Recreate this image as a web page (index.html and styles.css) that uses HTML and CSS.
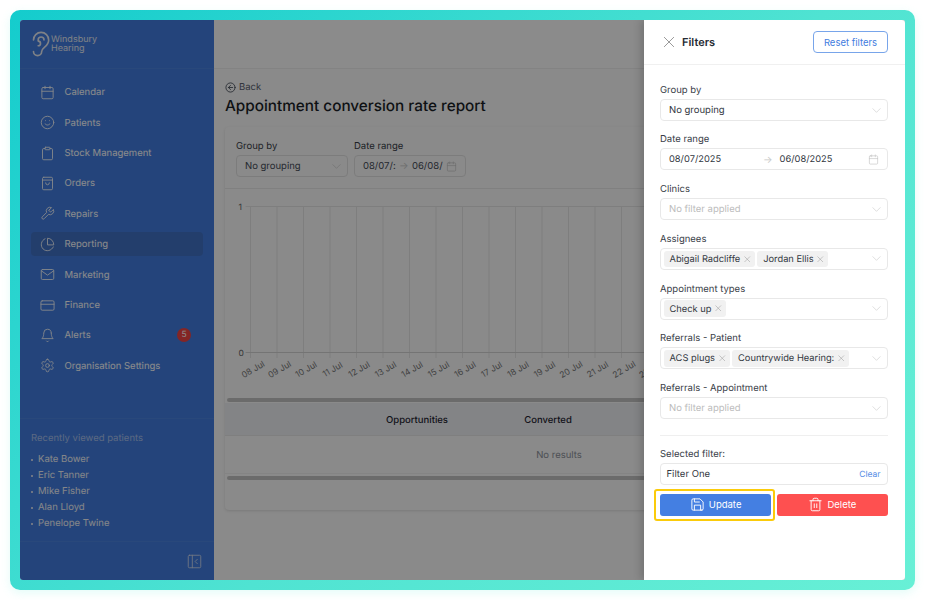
FILE: index.html
```html
<!DOCTYPE html>
<html lang="en">
<head>
<meta charset="utf-8">
<title>Appointment conversion rate report</title>
<link rel="stylesheet" href="styles.css">
</head>
<body>
<svg class="defs" aria-hidden="true"><defs>
<symbol id="chev" viewBox="0 0 24 24"><path d="M4 8l8 8 8-8"/></symbol>
<symbol id="cal" viewBox="0 0 24 24"><rect x="3" y="4" width="18" height="18" rx="2"/><path d="M16 2v4M8 2v4M3 10h18"/></symbol>
<symbol id="x" viewBox="0 0 24 24"><path d="M5 5l14 14M19 5L5 19"/></symbol>
</defs></svg>
<div class="frame">
<div class="shell">
  <aside class="sidebar">
    <div class="logo">
      <svg class="ear" viewBox="3 0 18 24"><path d="M6 8.500a6.500 6.500 0 1 1 13 0c0 6-6 6-6 10a3.500 3.500 0 1 1-7 0"/><path d="M15 8.500a2.500 2.500 0 0 0-5 0v1a2 2 0 1 1 0 4"/></svg>
      <div class="logo-text">Windsbury<br>Hearing</div>
    </div>
    <nav class="nav">
      <a class="nav-item"><svg class="nav-icon" viewBox="0 0 24 24"><rect x="3" y="4" width="18" height="18" rx="2"/><path d="M16 2v4M8 2v4M3 10h18"/></svg>Calendar</a>
      <a class="nav-item"><svg class="nav-icon" viewBox="0 0 24 24"><circle cx="12" cy="12" r="10"/><path d="M8 14s1.500 2 4 2 4-2 4-2M9 9h.01M15 9h.01"/></svg>Patients</a>
      <a class="nav-item"><svg class="nav-icon" viewBox="0 0 24 24"><rect x="8" y="2" width="8" height="4" rx="1"/><path d="M16 4h2a2 2 0 0 1 2 2v14a2 2 0 0 1-2 2H6a2 2 0 0 1-2-2V6a2 2 0 0 1 2-2h2"/></svg>Stock Management</a>
      <a class="nav-item"><svg class="nav-icon" viewBox="0 0 24 24"><rect x="4" y="2" width="16" height="20" rx="2"/><path d="M4 6.500h16M9 11a3 3 0 0 0 6 0"/></svg>Orders</a>
      <a class="nav-item"><svg class="nav-icon" viewBox="0 0 24 24"><path d="M14.700 6.300a1 1 0 0 0 0 1.400l1.600 1.600a1 1 0 0 0 1.400 0l3.770-3.770a6 6 0 0 1-7.940 7.940l-6.910 6.910a2.120 2.120 0 0 1-3-3l6.910-6.910a6 6 0 0 1 7.940-7.940l-3.760 3.760z"/></svg>Repairs</a>
      <a class="nav-item active"><svg class="nav-icon" viewBox="0 0 24 24"><path d="M21.210 15.890A10 10 0 1 1 8 2.830"/><path d="M22 12A10 10 0 0 0 12 2v10z"/></svg>Reporting</a>
      <a class="nav-item"><svg class="nav-icon" viewBox="0 0 24 24"><rect x="2" y="4" width="20" height="16" rx="2"/><path d="M22 6l-10 7L2 6"/></svg>Marketing</a>
      <a class="nav-item"><svg class="nav-icon" viewBox="0 0 24 24"><rect x="1.500" y="4.500" width="21" height="15" rx="2"/><path d="M1.500 10h21"/></svg>Finance</a>
      <a class="nav-item"><svg class="nav-icon" viewBox="0 0 24 24"><path d="M18 8A6 6 0 0 0 6 8c0 7-3 9-3 9h18s-3-2-3-9"/><path d="M13.730 21a2 2 0 0 1-3.460 0"/></svg>Alerts<span class="badge">5</span></a>
      <a class="nav-item"><svg class="nav-icon" viewBox="0 0 24 24"><path d="M12.220 2h-.44a2 2 0 0 0-2 2v.18a2 2 0 0 1-1 1.730l-.43.25a2 2 0 0 1-2 0l-.15-.08a2 2 0 0 0-2.730.73l-.22.38a2 2 0 0 0 .73 2.730l.15.1a2 2 0 0 1 1 1.720v.51a2 2 0 0 1-1 1.740l-.15.09a2 2 0 0 0-.73 2.730l.22.38a2 2 0 0 0 2.730.73l.15-.08a2 2 0 0 1 2 0l.43.25a2 2 0 0 1 1 1.730V20a2 2 0 0 0 2 2h.44a2 2 0 0 0 2-2v-.18a2 2 0 0 1 1-1.730l.43-.25a2 2 0 0 1 2 0l.15.08a2 2 0 0 0 2.730-.73l.22-.39a2 2 0 0 0-.73-2.730l-.15-.08a2 2 0 0 1-1-1.740v-.5a2 2 0 0 1 1-1.740l.15-.09a2 2 0 0 0 .73-2.730l-.22-.38a2 2 0 0 0-2.730-.73l-.15.08a2 2 0 0 1-2 0l-.43-.25a2 2 0 0 1-1-1.730V4a2 2 0 0 0-2-2z"/><circle cx="12" cy="12" r="3"/></svg>Organisation Settings</a>
    </nav>
    <section class="recent">
      <div class="recent-title">Recently viewed patients</div>
      <ul class="recent-list">
        <li>Kate Bower</li>
        <li>Eric Tanner</li>
        <li>Mike Fisher</li>
        <li>Alan Lloyd</li>
        <li>Penelope Twine</li>
      </ul>
    </section>
    <div class="side-foot">
      <svg class="collapse" viewBox="0 0 24 24"><rect x="2" y="2" width="20" height="20" rx="2"/><path d="M8.500 2v20M16.500 8.500l-3.500 3.500 3.500 3.500"/></svg>
    </div>
  </aside>

  <main class="main">
    <div class="topbar"></div>
    <div class="content">
      <a class="back"><svg class="back-icon" viewBox="0 0 24 24"><circle cx="12" cy="12" r="10"/><path d="M12 7.500L7.500 12l4.500 4.500M16.500 12h-9"/></svg>Back</a>
      <h1 class="title">Appointment conversion rate report</h1>
      <div class="card">
        <div class="card-filters">
          <div class="cf-group">
            <div class="cf-label">Group by</div>
            <div class="cf-box cf-select">No grouping<svg class="chev"><use href="#chev"/></svg></div>
          </div>
          <div class="cf-group">
            <div class="cf-label">Date range</div>
            <div class="cf-box cf-date"><span class="cf-d1">08/07/:</span><span class="arrow">→</span><span class="cf-d2">06/08/</span><svg class="calicon"><use href="#cal"/></svg></div>
          </div>
        </div>
        <svg class="chart" width="668" height="209" viewBox="0 0 668 209">
          <defs><pattern id="grid" x="25" y="0" width="26.500" height="209" patternUnits="userSpaceOnUse"><path class="gl" d="M.5 0v209"/></pattern></defs>
          <rect class="gridfill" x="25" y="17" width="643" height="152" fill="url(#grid)"/>
          <path class="gl" d="M21 17.500h647"/>
          <path class="axis" d="M21 163.500h647"/>
          <text class="ytick" x="13.500" y="20.500">1</text>
          <text class="ytick" x="13.500" y="166.500">0</text>
          <g class="xticks">
            <text transform="translate(29.500 183) rotate(-30)">08 Jul</text>
            <text transform="translate(56 183) rotate(-30)">09 Jul</text>
            <text transform="translate(82.500 183) rotate(-30)">10 Jul</text>
            <text transform="translate(109 183) rotate(-30)">11 Jul</text>
            <text transform="translate(135.500 183) rotate(-30)">12 Jul</text>
            <text transform="translate(162 183) rotate(-30)">13 Jul</text>
            <text transform="translate(188.500 183) rotate(-30)">14 Jul</text>
            <text transform="translate(215 183) rotate(-30)">15 Jul</text>
            <text transform="translate(241.500 183) rotate(-30)">16 Jul</text>
            <text transform="translate(268 183) rotate(-30)">17 Jul</text>
            <text transform="translate(294.500 183) rotate(-30)">18 Jul</text>
            <text transform="translate(321 183) rotate(-30)">19 Jul</text>
            <text transform="translate(347.500 183) rotate(-30)">20 Jul</text>
            <text transform="translate(374 183) rotate(-30)">21 Jul</text>
            <text transform="translate(400.500 183) rotate(-30)">22 Jul</text>
            <text transform="translate(427 183) rotate(-30)">23 Jul</text>
          </g>
        </svg>
        <div class="scrollbar"></div>
        <div class="thead"><div></div><div class="th">Opportunities</div><div class="th">Converted</div></div>
        <div class="empty">No results</div>
        <div class="scrollbar scrollbar-low"></div>
      </div>
    </div>
  </main>

  <div class="scrim"></div>

  <aside class="drawer">
    <header class="drawer-head">
      <svg class="close"><use href="#x"/></svg>
      <div class="drawer-title">Filters</div>
      <button class="reset">Reset filters</button>
    </header>
    <div class="drawer-body">
      <div class="field">
        <label class="lbl">Group by</label>
        <div class="box">No grouping<svg class="chev"><use href="#chev"/></svg></div>
      </div>
      <div class="field">
        <label class="lbl">Date range</label>
        <div class="box date"><span class="d1">08/07/2025</span><span class="arrow">→</span><span class="d2">06/08/2025</span><svg class="calicon"><use href="#cal"/></svg></div>
      </div>
      <div class="field">
        <label class="lbl">Clinics</label>
        <div class="box ph">No filter applied<svg class="chev"><use href="#chev"/></svg></div>
      </div>
      <div class="field">
        <label class="lbl">Assignees</label>
        <div class="box tags"><span class="tag">Abigail Radcliffe<svg class="tag-x"><use href="#x"/></svg></span><span class="tag">Jordan Ellis<svg class="tag-x"><use href="#x"/></svg></span><svg class="chev"><use href="#chev"/></svg></div>
      </div>
      <div class="field">
        <label class="lbl">Appointment types</label>
        <div class="box tags"><span class="tag">Check up<svg class="tag-x"><use href="#x"/></svg></span><svg class="chev"><use href="#chev"/></svg></div>
      </div>
      <div class="field">
        <label class="lbl">Referrals - Patient</label>
        <div class="box tags"><span class="tag">ACS plugs<svg class="tag-x"><use href="#x"/></svg></span><span class="tag">Countrywide Hearing:<svg class="tag-x"><use href="#x"/></svg></span><svg class="chev"><use href="#chev"/></svg></div>
      </div>
      <div class="field">
        <label class="lbl">Referrals - Appointment</label>
        <div class="box ph">No filter applied<svg class="chev"><use href="#chev"/></svg></div>
      </div>
      <hr class="divider">
      <label class="lbl sel-lbl">Selected filter:</label>
      <div class="box selected">Filter One<span class="clear">Clear</span></div>
      <div class="actions">
        <button class="btn update"><svg class="btn-icon" viewBox="0 0 24 24"><path d="M19 21H5a2 2 0 0 1-2-2V5a2 2 0 0 1 2-2h11l5 5v11a2 2 0 0 1-2 2z"/><path d="M17 21v-8H7v8M7 3v5h8"/></svg>Update</button>
        <button class="btn delete"><svg class="btn-icon" viewBox="0 0 24 24"><path d="M3 6h18M19 6v14a2 2 0 0 1-2 2H7a2 2 0 0 1-2-2V6m3 0V4a2 2 0 0 1 2-2h4a2 2 0 0 1 2 2v2M10 11v6M14 11v6"/></svg>Delete</button>
      </div>
    </div>
  </aside>
</div>
</div>
</body>
</html>
```
FILE: styles.css
```css
* { box-sizing: border-box; }
html, body { margin: 0; height: 100%; background: #fff; }
body { font-family: Inter, "Liberation Sans", sans-serif; font-size: 9.5px; color: #262b33; overflow: hidden; text-rendering: geometricPrecision; }
.defs { position: absolute; width: 0; height: 0; }
svg { fill: none; stroke: currentColor; stroke-width: 2; stroke-linecap: round; stroke-linejoin: round; flex: none; }

.frame {
  margin: 10px; height: 580px; padding: 10px; border-radius: 10px;
  background: linear-gradient(135deg, #14cccd 0%, #4fe3d2 55%, #68f0d6 100%);
  box-shadow: 0 3px 10px rgba(100, 240, 214, .18);
}
.shell { position: relative; display: flex; height: 560px; background: #fbfbfb; overflow: hidden; border-radius: 3px; }

/* Sidebar */
.sidebar { width: 193.5px; flex: none; display: flex; flex-direction: column; background: #427de0; color: #fff; }
.logo { height: 48.5px; flex: none; display: flex; align-items: center; padding: 0 0 0 9.5px; border-bottom: 1px solid rgba(255,255,255,.05); }
.ear { width: 21px; height: 28px; margin-right: .5px; stroke-width: 1.4; color: #e8ecf5; }
.logo-text { margin-top: 1px; font-size: 9px; line-height: 9px; color: #e8ecf5; }
.nav { display: flex; flex-direction: column; gap: 6.4px; padding: 11.800px 11px 0; }
.nav-item { position: relative; height: 24px; display: flex; align-items: center; gap: 9.5px; padding: 1px 0 0 9px; border-radius: 4px; color: #fff; }
.nav-item.active { background: #4071c5; }
.nav-icon { width: 15px; height: 15px; margin-top: -1px; stroke-width: 1.5; opacity: .9; }
.badge { position: absolute; right: 11.500px; top: 5px; width: 14px; height: 14px; border-radius: 50%; background: #ef4444; font-size: 8.5px; line-height: 14px; text-align: center; }
.recent { margin-top: auto; height: 123px; flex: none; padding: 14px 11px 0; border-top: 1px solid rgba(255,255,255,.05); }
.recent-title { font-size: 9.5px; line-height: 12px; color: #a8c0ee; }
.recent-list { list-style: none; margin: 7px 0 0; padding: 0; font-size: 9.5px; line-height: 16px; color: #f3f5fa; }
.recent-list li { display: flex; align-items: center; gap: 5px; }
.recent-list li::before { content: ""; width: 2px; height: 2px; border-radius: 50%; background: #f3f5fa; }
.side-foot { height: 39px; flex: none; display: flex; align-items: center; justify-content: flex-end; padding: 0 11.500px 0 0; border-top: 1px solid rgba(255,255,255,.05); }
.collapse { width: 15px; height: 15px; stroke-width: 1.4; color: #cfd9ee; }

/* Main */
.main { flex: none; width: 691.5px; background: #fbfbfb; }
.topbar { height: 48.5px; background: #fdfdfd; border-bottom: 1px solid #eee; }
.content { padding: 13px 12px 0 11.5px; }
.back { display: flex; align-items: center; gap: 3px; height: 12px; color: #5a6170; }
.back-icon { width: 11px; height: 11px; stroke-width: 1.8; color: #3f4654; }
.title { margin: 1px 0 0; font-size: 15.3px; line-height: 22px; font-weight: 500; color: #1b1f27; }
.card { margin-top: 10px; height: 383px; background: #fbfbfb; border-radius: 4px; box-shadow: 0 1px 3px rgba(0,0,0,.12); overflow: hidden; }
.card-filters { height: 62px; display: flex; gap: 6px; padding: 14px 11px 0; border-bottom: 1px solid #e9e9e9; }
.cf-label { line-height: 12px; color: #383d47; }
.cf-box { height: 22.5px; margin-top: 2px; display: flex; align-items: center; border: 1px solid #e2e2e2; border-radius: 4px; padding: 1px 8px 0; color: #454b57; width: 112px; white-space: nowrap; }
.cf-select { justify-content: space-between; }
.cf-date { justify-content: space-between; }
.cf-date .calicon { margin-left: 0; }
.chart { display: block; }
.chart .gl { stroke: #e6e6e6; stroke-width: 1; fill: none; }
.chart .gridfill { stroke: none; }
.chart .axis { stroke: #d4d4d4; stroke-width: 1; }
.ytick { font-size: 8.5px; fill: #666; stroke: none; }
.xticks text { font-size: 8.5px; fill: #777; stroke: none; text-anchor: middle; }
.scrollbar { height: 4px; margin: 0 2px; border-radius: 2px; background: #c4c4c4; }
.scrollbar-low { margin-top: 2px; }
.thead { margin-top: 1.5px; height: 33px; padding-top: 2px; display: grid; grid-template-columns: 126.5px 131px 131px; align-items: center; background: #eef1f5; border-bottom: 1px solid #e8e8e8; }
.th { text-align: center; font-weight: 500; color: #1f2430; }
.empty { height: 38px; padding-top: 1px; display: flex; align-items: center; justify-content: center; color: #8c919a; border-bottom: 1px solid #f1f1f1; }

/* Overlay */
.scrim { position: absolute; inset: 0; background: rgba(0,0,0,.45); }

/* Drawer */
.drawer { position: absolute; top: 0; right: 0; bottom: 0; width: 261px; background: #fff; box-shadow: -3px 0 8px rgba(0,0,0,.18); }
.drawer-head { height: 45px; display: flex; align-items: center; padding: 0 17px 0 17px; border-bottom: 1px solid #f0f0f0; }
.close { width: 16px; height: 16px; stroke-width: 1.300; color: #8a8a8a; }
.drawer-title { margin-left: 5px; font-size: 11px; font-weight: 600; color: #262b33; }
.reset { margin-left: auto; width: 75px; height: 22px; padding: 0; font: inherit; color: #3f7de0; background: #fff; border: 1px solid #78a5ea; border-radius: 4px; }
.drawer-body { padding: 19.500px 17px 0 16px; }
.field { height: 49.75px; }
.lbl { display: block; line-height: 12px; color: #383d47; }
.box { height: 22px; margin-top: 2px; display: flex; align-items: center; padding: 1px 8px 0; border: 1px solid #e8e8e8; border-radius: 4px; color: #33383f; }
.chev { width: 11px; height: 11px; margin-left: auto; margin-right: -3px; stroke-width: 1.2; color: #c4c4c4; }
.ph { color: #bcbcbc; }
.date { font-size: 9.3px; }
.d1 { width: 94px; }
.d2 { margin-left: 7px; }
.arrow { color: #c9c9c9; font-size: 10px; }
.calicon { width: 11px; height: 11px; margin-left: auto; stroke-width: 1.4; color: #c4c4c4; }
.tags { padding: 0 8px 0 2.500px; gap: 2.500px; }
.tag { height: 16.500px; display: flex; align-items: center; gap: 2.500px; padding: 1px 3.500px 0 6px; border-radius: 3px; background: #f1f1f1; color: #33383f; font-size: 9.3px; white-space: nowrap; }
.tag-x { width: 8.500px; height: 8.500px; margin-top: -1px; stroke-width: 1.500; color: #9a9a9a; }
.divider { margin: 2.500px 0 0; height: 1px; border: 0; background: #efefef; }
.sel-lbl { margin-top: 13px; }
.selected { padding: 1px 6.500px 0 5.500px; justify-content: space-between; }
.clear { font-size: 8.5px; color: #5a8fe6; }
.actions { display: flex; gap: 5.500px; margin-top: 8.500px; }
.btn { position: relative; flex: 1; height: 22px; padding: 0; display: flex; align-items: center; justify-content: center; gap: 4px; font: inherit; color: #fff; border: 0; border-radius: 3px; }
.btn-icon { width: 15px; height: 15px; stroke-width: 1.5; }
.update { background: #447fe2; }
.update::after { content: ""; position: absolute; inset: -5px -4px -5px -6px; border: 2px solid #fbcb0a; border-radius: 3px; }
.delete { background: #fe5050; }
```
